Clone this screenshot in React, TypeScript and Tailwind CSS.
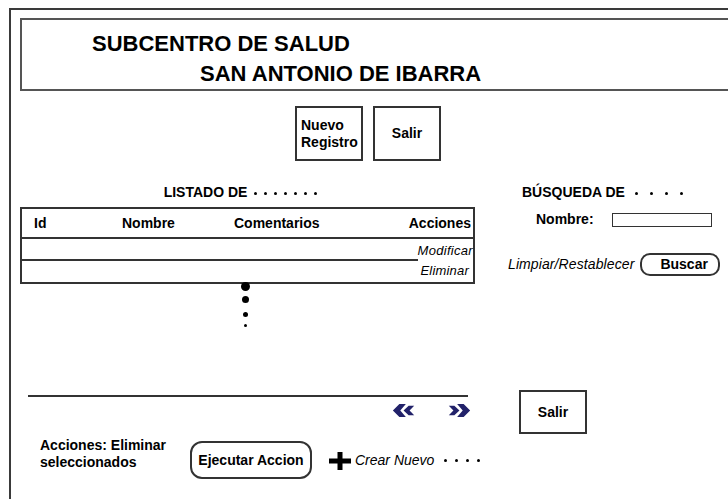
import React from 'react';

const sans = { fontFamily: '"Liberation Sans", Arial, sans-serif' };

const Dots = ({ n, gap, ml }: { n: number; gap: string; ml: string }) => (
  <span className={`inline-flex items-center align-middle ${gap} ${ml}`}>
    {Array.from({ length: n }).map((_, i) => (
      <span key={i} className="w-[3px] h-[3px] rounded-full bg-black inline-block" />
    ))}
  </span>
);

// double chevron, outer head heavier like the mockup's
const Chevrons = ({ dir }: { dir: 'left' | 'right' }) => (
  <svg width="24" height="13" viewBox="0 0 24 14" className={dir === 'left' ? '' : 'scale-x-[-1]'}>
    <path d="M7 0 L0 7 L7 14 L14 14 L8 7 L14 0 Z" fill="#22226a" />
    <path d="M17 2 L11.5 7 L17 12 L23 12 L18 7 L23 2 Z" fill="#22226a" />
  </svg>
);

export default function App() {
  return (
    <div className="w-[728px] h-[499px] overflow-hidden bg-white text-black" style={sans}>
      <div className="ml-[9px] mt-[8px] w-[740px] h-[520px] border-l-2 border-t-2 border-[#3a3a3a] pl-[9px] pt-[8px]">
        {/* header */}
        <div className="h-[73px] border-l-2 border-t-2 border-b-2 border-[#555] font-bold text-[22px] leading-none">
          <div className="pl-[70px] pt-[13px]">SUBCENTRO DE SALUD</div>
          <div className="pl-[178px] pt-[8px]">SAN ANTONIO DE IBARRA</div>
        </div>

        {/* top buttons */}
        <div className="flex gap-[10px] pl-[275px] mt-[15px]">
          <div className="w-[68px] h-[55px] border-2 border-[#333] font-bold text-[14px] leading-[17px] flex items-center pl-[4px]">
            <span>Nuevo<br />Registro</span>
          </div>
          <div className="w-[68px] h-[55px] border-2 border-[#333] font-bold text-[14px] flex items-center justify-center">
            Salir
          </div>
        </div>

        {/* listado + busqueda */}
        <div className="flex mt-[24px]">
          <div className="w-[455px]">
            <div className="text-center font-bold text-[14px] leading-none pr-[14px]">
              LISTADO DE<Dots n={7} gap="gap-[7px]" ml="ml-[7px]" />
            </div>
            <div className="mt-[8px] border-2 border-[#333] h-[77px] text-[14px]">
              <div className="h-[30px] border-b-2 border-[#333] grid grid-cols-[88px_112px_1fr_auto] items-center font-bold pl-[12px] pr-[2px]">
                <span>Id</span>
                <span>Nombre</span>
                <span>Comentarios</span>
                <span>Acciones</span>
              </div>
              <div className="h-[22px] border-b-2 border-[#333] mr-[55px] relative">
                <span className="absolute right-[-55px] top-[2px] italic text-[13px] tracking-[0.3px]">Modificar</span>
              </div>
              <div className="h-[20px] flex justify-end items-center pr-[4px] italic text-[13px] tracking-[0.2px]">
                Eliminar
              </div>
            </div>
            <div className="flex flex-col items-center -mt-[2px] pr-[4px]">
              <span className="w-[9px] h-[9px] rounded-full bg-black" />
              <span className="mt-[5px] w-[7px] h-[7px] rounded-full bg-black" />
              <span className="mt-[9px] w-[5px] h-[5px] rounded-full bg-black" />
              <span className="mt-[7px] w-[3px] h-[3px] rounded-full bg-black" />
            </div>
          </div>

          <div className="ml-[43px] flex-1">
            <div className="font-bold text-[14px] leading-none pl-[4px]">
              BÚSQUEDA DE<Dots n={4} gap="gap-[12px]" ml="ml-[10px]" />
            </div>
            <div className="flex items-center mt-[10px] pl-[18px]">
              <span className="font-bold text-[14px] w-[76px]">Nombre:</span>
              <span className="w-[100px] h-[14px] border border-[#333]" />
            </div>
            <div className="flex items-center mt-[23px] -ml-[10px]">
              <span className="italic text-[14px] tracking-[0.1px]">Limpiar/Restablecer</span>
              <span className="ml-[6px] w-[80px] h-[23px] border-2 border-[#333] rounded-[10px] flex items-center pl-[18px] font-bold text-[14px]">
                Buscar
              </span>
            </div>
          </div>
        </div>

        {/* pagination */}
        <div className="flex items-start mt-[68px]">
          <div className="ml-[8px] w-[440px]">
            <div className="border-t-2 border-[#333]" />
            <div className="flex justify-end gap-[31px] mt-[7px] -mr-[3px]">
              <Chevrons dir="left" />
              <Chevrons dir="right" />
            </div>
          </div>
          <div className="ml-[51px] -mt-[5px] w-[68px] h-[44px] border-2 border-[#333] flex items-center justify-center font-bold text-[14px]">
            Salir
          </div>
        </div>

        {/* bottom actions */}
        <div className="flex items-start mt-[7px]">
          <div className="ml-[20px] -mt-[4px] font-bold text-[14px] leading-[17px] w-[150px]">
            Acciones: Eliminar<br />seleccionados
          </div>
          <div className="w-[122px] h-[38px] border-2 border-[#333] rounded-[12px] flex items-center justify-center font-bold text-[14px]">
            Ejecutar Accion
          </div>
          <div className="flex items-center mt-[9px]">
            <svg width="22" height="18" viewBox="0 0 22 18" className="ml-[17px]">
              <rect x="0" y="6.5" width="22" height="5" fill="#000" />
              <rect x="8.5" y="0" width="5" height="18" fill="#000" />
            </svg>
            <span className="italic text-[14px] ml-[4px]">Crear Nuevo</span>
            <Dots n={4} gap="gap-[8px]" ml="ml-[10px]" />
          </div>
        </div>
      </div>
    </div>
  );
}
